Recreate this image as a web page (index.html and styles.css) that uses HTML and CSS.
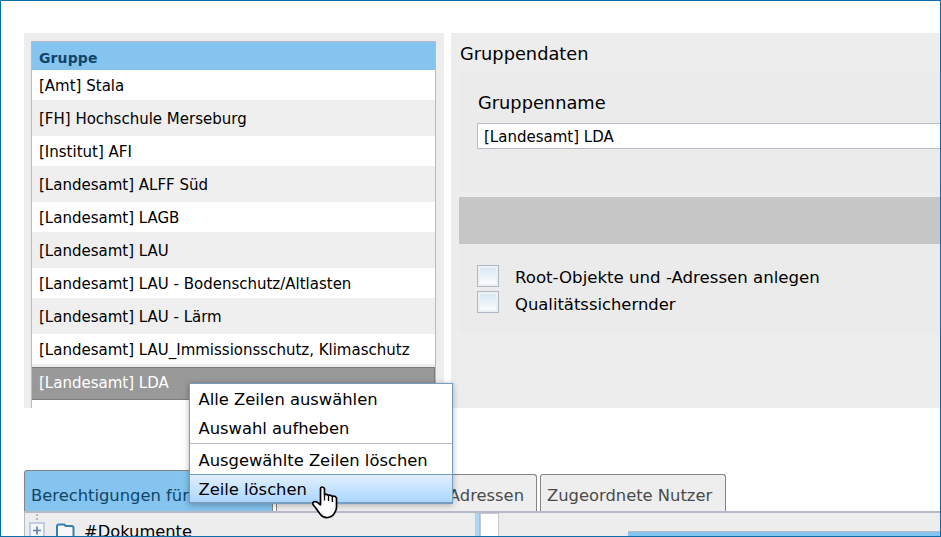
FILE: index.html
```html
<!DOCTYPE html>
<html lang="de">
<head>
<meta charset="utf-8">
<title>Gruppenverwaltung</title>
<link rel="stylesheet" href="styles.css">
</head>
<body>
<div class="window">
  <main class="panels">
    <section class="group-panel">
      <div class="table">
        <div class="table-head">Gruppe</div>
        <div class="row">[Amt] Stala</div>
        <div class="row alt">[FH] Hochschule Merseburg</div>
        <div class="row">[Institut] AFI</div>
        <div class="row alt">[Landesamt] ALFF Süd</div>
        <div class="row">[Landesamt] LAGB</div>
        <div class="row alt">[Landesamt] LAU</div>
        <div class="row">[Landesamt] LAU - Bodenschutz/Altlasten</div>
        <div class="row alt">[Landesamt] LAU - Lärm</div>
        <div class="row">[Landesamt] LAU_Immissionsschutz, Klimaschutz</div>
        <div class="row selected">[Landesamt] LDA</div>
      </div>
    </section>
    <section class="data-panel">
      <h2>Gruppendaten</h2>
      <div class="name-box">
        <div class="label">Gruppenname</div>
        <div class="field">[Landesamt] LDA</div>
      </div>
      <div class="bar"></div>
      <div class="checks">
        <div class="check"><span class="box"></span><span class="check-text root">Root-Objekte und -Adressen anlegen</span></div>
        <div class="check"><span class="box"></span><span class="check-text">Qualitätssichernder</span></div>
      </div>
    </section>
  </main>
  <nav class="tabs">
    <div class="tab active">Berechtigungen für</div>
    <div class="tab second">Adressen</div>
    <div class="tab third">Zugeordnete Nutzer</div>
  </nav>
  <section class="content">
    <div class="tree">
      <svg class="expander" width="19" height="23" viewBox="0 0 19 23">
        <path d="M9 1v2M9 5v2" stroke="#b8b8b8" stroke-width="2"/>
        <rect x="2" y="10" width="14" height="16" fill="#f4f6f9" stroke="#c3cce4" stroke-width="2"/>
        <path d="M5 17.500h8M9 13.500v8" stroke="#6480b0" stroke-width="1.700"/>
      </svg>
      <svg class="folder" width="20" height="23" viewBox="0 0 20 23">
        <path d="M2 25V13.500q0-2 2-2h5q1 0 1.500 1.500h6q2 0 2 2v11" fill="#f8f8f8" stroke="#347fae" stroke-width="2"/>
      </svg>
      <span class="tree-text">#Dokumente</span>
    </div>
    <div class="splitter"></div>
    <div class="strip"></div>
    <div class="grid-head"></div>
  </section>
</div>
<div class="menu">
  <div class="item i1">Alle Zeilen auswählen</div>
  <div class="item i2">Auswahl aufheben</div>
  <div class="item i3">Ausgewählte Zeilen löschen</div>
  <div class="item hover">Zeile löschen</div>
</div>
<svg class="cursor" width="28" height="34" viewBox="0 0 28 34">
  <path d="M9.500 4q0-2 1.800-2t2.200 2v5.500q2.600-.7 3.800.8 2.600-.6 3.700 1 3.500-.5 4.500 1.700V22q0 3-1.500 5-1.500 4.500-7 5.500-5 .5-7.500-3L4 22q-3.500-3.500-1.500-5 2-1.200 4.500.8l2.500 2z" fill="#fff" stroke="#000" stroke-width="1.700" stroke-linejoin="round"/>
  <path d="M13.500 9.500v6M17.500 10.500V16M21.300 11.500V17" fill="none" stroke="#000" stroke-width="1.300"/>
</svg>
</body>
</html>
```
FILE: styles.css
```css
* { box-sizing: border-box; }
body {
  margin: 0;
  width: 941px;
  height: 537px;
  overflow: hidden;
  position: relative;
  font-family: "DejaVu Sans", sans-serif;
  color: #000;
}
.window {
  height: 537px;
  border: 1px solid #0f6cab;
  background: #fff;
  overflow: hidden;
  padding: 32px 0 0 23px;
  display: flex;
  flex-direction: column;
}
.panels { display: flex; gap: 7px; height: 375px; flex: none; }
.group-panel {
  width: 420px;
  flex: none;
  background: #ededed;
  padding: 8px 8px 0 7px;
  overflow: hidden;
}
.table {
  height: 380px;
  border: 1px solid #b5bac7;
  background: #fff;
  font-size: 15px;
  white-space: nowrap;
}
.table-head {
  height: 28px;
  padding-left: 7px;
  font-size: 14px;
  line-height: 32px;
  letter-spacing: .1px;
  background: #84c4ee;
  color: #124468;
  font-weight: bold;
}
.row { height: 30px; padding-left: 7px; line-height: 32px; }
.row.alt { height: 36px; padding-top: 3px; background: #efefef; }
.row.selected {
  height: 33px;
  margin-top: 3px;
  line-height: 30px;
  border: 1px solid #7c7c7c;
  border-left: 0;
  background: #999;
  color: #fff;
  box-shadow: 0 -3px #ededed;
}
.data-panel { flex: 1; background: #ededed; padding: 0 0 0 8px; }
h2 {
  margin: 0;
  height: 38px;
  padding-left: 1px;
  font-size: 17.800px;
  font-weight: normal;
  line-height: 42px;
}
.name-box { height: 120px; background: #ebebeb; padding: 20px 0 0 18px; }
.label { height: 32px; padding-left: 1px; font-size: 17.800px; line-height: 24px; }
.field {
  height: 26px;
  border: 1px solid #b5bac7;
  border-right: 0;
  background: #fff;
  padding-left: 6px;
  font-size: 15px;
  line-height: 26px;
}
.bar { height: 47px; margin-top: 6px; background: #c6c6c6; }
.checks {
  height: 89px;
  padding: 21px 0 0 18px;
  background: #ebebeb;
  display: flex;
  flex-direction: column;
  gap: 4px;
}
.check { display: flex; height: 22px; gap: 16px; }
.check + .check .check-text { line-height: 27px; }
.box {
  width: 22px;
  height: 22px;
  border: 1px solid #b0b7c7;
  background: linear-gradient(#d4e5f1, #fff);
  box-shadow: inset 0 0 0 2px #eef1f4;
}
.check-text { font-size: 16.400px; line-height: 25px; }
.root { font-size: 16.600px; }
.tabs {
  display: flex;
  align-items: flex-end;
  gap: 3px;
  height: 41px;
  margin-top: 62px;
  flex: none;
  font-size: 16.350px;
  color: #4a4a4a;
}
.tab {
  height: 37px;
  padding-left: 6px;
  border: 1px solid #858585;
  border-bottom: 0;
  border-radius: 3px 3px 0 0;
  background: #eee;
  line-height: 41px;
  white-space: nowrap;
  overflow: hidden;
}
.active { width: 249px; height: 41px; line-height: 49px; background: #84c4ee; color: #124468; }
.second { width: 261px; display: flex; justify-content: flex-end; padding-right: 12px; }
.third { width: 186px; }
.content {
  display: flex;
  flex: 1;
  border-top: 2px solid #b5bac7;
  border-left: 1px solid #b5bac7;
  background: #ededed;
  overflow: hidden;
}
.tree { display: flex; width: 450px; flex: none; height: 23px; padding-left: 3px; }
.folder { margin-left: 8px; }
.tree-text { margin-left: 9px; font-size: 16.300px; line-height: 38px; height: 23px; }
.splitter { width: 5px; background: #acd8f7; border-left: 1px solid #c3c8cf; border-right: 1px solid #b5bac7; }
.strip { width: 19px; background: #fff; border: 1px solid #c8c8c8; border-bottom: 0; }
.grid-head { flex: 1; height: 6px; margin: 18px 0 0 129px; border-top: 1px solid #b5bac7; background: #84c4ee; }
.menu {
  position: absolute;
  left: 189px;
  top: 383px;
  width: 264px;
  height: 121px;
  border: 1px solid #759dc0;
  border-bottom-width: 2px;
  background: #fff;
  box-shadow: 0 1px 6px rgba(0, 0, 0, .3);
  font-size: 16.350px;
}
.item { height: 29px; padding-left: 8.500px; line-height: 31px; white-space: nowrap; }
.i2 { height: 31px; border-bottom: 1px solid #b5bac7; }
.i3 { height: 30px; line-height: 33px; }
.hover {
  height: 28px;
  line-height: 30px;
  border-top: 1px solid #759dc0;
  background: linear-gradient(#e2f0ff, #abd6ff);
}
.cursor { position: absolute; left: 311px; top: 485px; }
```
